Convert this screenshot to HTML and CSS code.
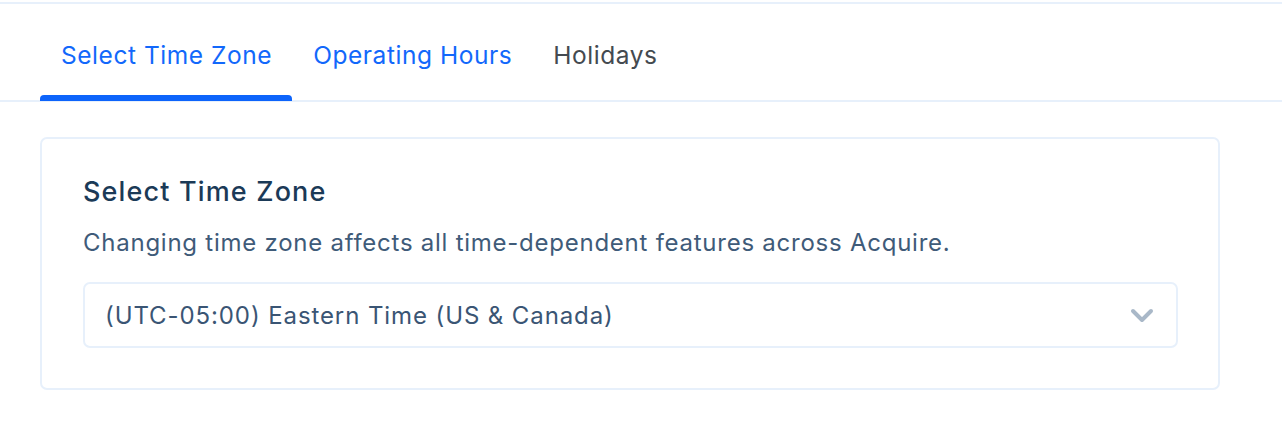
FILE: index.html
```html
<!DOCTYPE html>
<html lang="en">
<head>
<meta charset="utf-8">
<link rel="stylesheet" href="styles.css">
</head>
<body>
<div class="page">
  <nav class="tabs">
    <div class="tab active">Select Time Zone</div>
    <div class="tab link">Operating Hours</div>
    <div class="tab">Holidays</div>
  </nav>
  <section class="content">
    <div class="card">
      <h2 class="card-title">Select Time Zone</h2>
      <p class="card-desc">Changing time zone affects all time-dependent features across Acquire.</p>
      <div class="select">
        <span class="select-value">(UTC-05:00) Eastern Time (US &amp; Canada)</span>
        <svg class="chevron" width="24" height="16" viewBox="0 0 24 16"><path d="M3 3 L12 12 L21 3" fill="none" stroke="#a9b8c8" stroke-width="4" stroke-linecap="round" stroke-linejoin="round"/></svg>
      </div>
    </div>
  </section>
</div>
</body>
</html>
```

FILE: styles.css
```css
* { box-sizing: border-box; }
html, body { margin: 0; padding: 0; background: #fff; }
body { font-family: Inter, "Noto Sans", sans-serif; }
.page {
  border-top: 2px solid #e7f0fb;
  margin-top: 2px;
}
.tabs {
  display: flex;
  padding: 0 40px;
  height: 98px;
  align-items: stretch;
  border-bottom: 2px solid #e7f0fb;
}
.tab {
  position: relative;
  display: flex;
  align-items: center;
  padding: 5px 20px 0 21px;
  font-size: 24.5px;
  color: #444a50;
  letter-spacing: 0.55px;
}
.tab.active, .tab.link { color: #1268fb; }
.tab.active::after {
  content: "";
  position: absolute;
  left: 0; right: 0; bottom: -1px;
  height: 6px;
  background: #0d64fb;
  border-radius: 4px 4px 0 0;
}
.content { padding: 35px 62px 0 40px; }
.card {
  border: 2px solid #e7f0fb;
  border-radius: 7px;
  padding: 35px 40px 40px 41px;
}
.card-title {
  margin: 0;
  font-size: 27px;
  font-weight: 500;
  color: #1b3a57;
  line-height: 36px;
  letter-spacing: 1.15px;
}
.card-desc {
  margin: 18px 0 0;
  font-size: 24px;
  color: #3f5b79;
  line-height: 30px;
  letter-spacing: 0.75px;
}
.select {
  margin-top: 24px;
  height: 66px;
  border: 2px solid #e7f0fb;
  border-radius: 7px;
  display: flex;
  align-items: center;
  justify-content: space-between;
  padding: 0 22px 0 20px;
}
.select-value {
  font-size: 24px;
  color: #3a5574;
  letter-spacing: 0.9px;
}
.chevron { display: block; margin-top: 2px; }
```
